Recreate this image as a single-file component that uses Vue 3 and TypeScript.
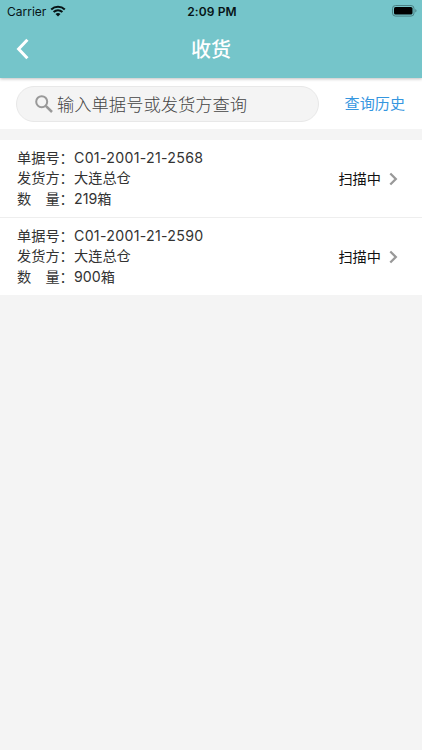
<script setup lang="ts">
interface Receipt {
  code: string
  sender: string
  quantity: string
  status: string
}

const receipts: Receipt[] = [
  { code: 'C01-2001-21-2568', sender: '大连总仓', quantity: '219箱', status: '扫描中' },
  { code: 'C01-2001-21-2590', sender: '大连总仓', quantity: '900箱', status: '扫描中' },
]
</script>

<template>
  <div class="screen">
    <header class="header">
      <div class="status-bar">
        <div class="carrier">
          <span>Carrier</span>
          <svg class="wifi" viewBox="0 0 16 12">
            <path d="M1.2 4.4C5 .8 11 .8 14.8 4.4M3.6 7C6.2 4.7 9.8 4.7 12.4 7" fill="none" stroke="#071416" stroke-width="2.1" />
            <path d="M5.5 9Q8 7 10.5 9L8 11.5Z" fill="#071416" />
          </svg>
        </div>
        <span class="clock">2:09 PM</span>
        <svg class="battery" viewBox="0 0 25 12">
          <rect x=".5" y=".5" width="21.5" height="10.6" rx="3" fill="none" stroke="#4b8084" />
          <rect x="2" y="2" width="18.5" height="7.6" rx="1.6" fill="#000" />
          <path d="M23.3 4v3.6q1.2-.5 1.2-1.8T23.3 4z" fill="#4b8084" />
        </svg>
      </div>
      <nav class="nav">
        <svg class="back" viewBox="0 0 14 22">
          <path d="M11.4 1.8 2.6 11l8.8 9.2" fill="none" stroke="#fff" stroke-width="3" />
        </svg>
        <h1 class="title">收货</h1>
      </nav>
    </header>

    <section class="search-row">
      <div class="search">
        <svg class="magnifier" viewBox="0 0 18 18">
          <circle cx="6.7" cy="6.7" r="5.5" fill="none" stroke="#999" stroke-width="2" />
          <path d="m10.8 10.8 6.2 6.2" fill="none" stroke="#999" stroke-width="2.5" />
        </svg>
        <span class="placeholder">输入单据号或发货方查询</span>
      </div>
      <a class="history">查询历史</a>
    </section>

    <main class="list">
      <article v-for="item in receipts" :key="item.code" class="row">
        <div class="details">
          <div class="line"><span class="label">单据号：</span><span class="code">{{ item.code }}</span></div>
          <div class="line"><span class="label">发货方：</span><span>{{ item.sender }}</span></div>
          <div class="line"><span class="label">数　量：</span><span>{{ item.quantity }}</span></div>
        </div>
        <span class="state">{{ item.status }}</span>
        <svg class="chevron" viewBox="0 0 9 14">
          <path d="m1.3 1.5 5.5 5.5-5.5 5.5" fill="none" stroke="#999" stroke-width="2.3" />
        </svg>
      </article>
    </main>
  </div>
</template>

<style>
body {
  background: #f4f4f4;
}
</style>

<style scoped>
.screen {
  min-height: 750px;
  background: #f4f4f4;
  font-family: Inter, "Noto Sans CJK SC", sans-serif;
  color: #333;
}
.header {
  position: relative;
  height: 78px;
  background: #75c5ca;
  box-shadow: 0 1px 3px rgba(0, 0, 0, 0.25);
}
.status-bar {
  display: grid;
  grid-template-columns: 1fr auto 1fr;
  align-items: center;
  height: 22px;
  padding: 0 5px 0 7px;
  font-size: 12px;
  color: #071416;
}
.carrier {
  display: flex;
  align-items: center;
  gap: 4px;
}
.wifi {
  width: 16px;
  height: 12px;
}
.clock {
  font-weight: 600;
  letter-spacing: 0.1px;
}
.battery {
  justify-self: end;
  width: 25px;
  height: 12px;
}
.nav {
  display: grid;
  grid-template-columns: 1fr auto 1fr;
  align-items: center;
  height: 54px;
  padding: 0 16px;
}
.back {
  width: 14px;
  height: 22px;
}
.title {
  margin: 0;
  padding-top: 2px;
  font-size: 20px;
  line-height: 28px;
  font-weight: 500;
  color: #fff;
}
.search-row {
  display: flex;
  align-items: center;
  box-sizing: border-box;
  height: 51px;
  padding: 0 17px 0 16px;
  background: #fff;
}
.search {
  display: flex;
  align-items: center;
  gap: 4px;
  box-sizing: border-box;
  width: 303px;
  height: 36px;
  padding-left: 18px;
  border: 1px solid #e8e8e8;
  border-radius: 18px;
  background: #f4f4f4;
}
.magnifier {
  width: 18px;
  height: 18px;
}
.placeholder {
  padding-top: 2px;
  font-size: 17.3px;
  line-height: 24px;
  font-weight: 300;
  color: #444;
}
.history {
  margin-left: auto;
  padding-top: 1px;
  font-size: 15.1px;
  line-height: 22px;
  color: #3596df;
  white-space: nowrap;
}
.list {
  margin-top: 11px;
}
.row {
  display: flex;
  align-items: center;
  box-sizing: border-box;
  height: 77px;
  padding: 0 24px 0 17px;
  background: #fff;
}
.row:not(:last-child) {
  height: 78px;
  border-bottom: 1px solid #eee;
}
.details {
  flex: 1;
}
.line {
  display: flex;
  height: 20.4px;
  font-size: 14.2px;
  line-height: 20.4px;
}
.label {
  width: 57px;
}
.code {
  letter-spacing: 0.28px;
}
.state {
  margin-right: 8px;
  font-size: 14.2px;
  line-height: 20px;
  color: #111;
}
.chevron {
  width: 9px;
  height: 14px;
}
</style>
